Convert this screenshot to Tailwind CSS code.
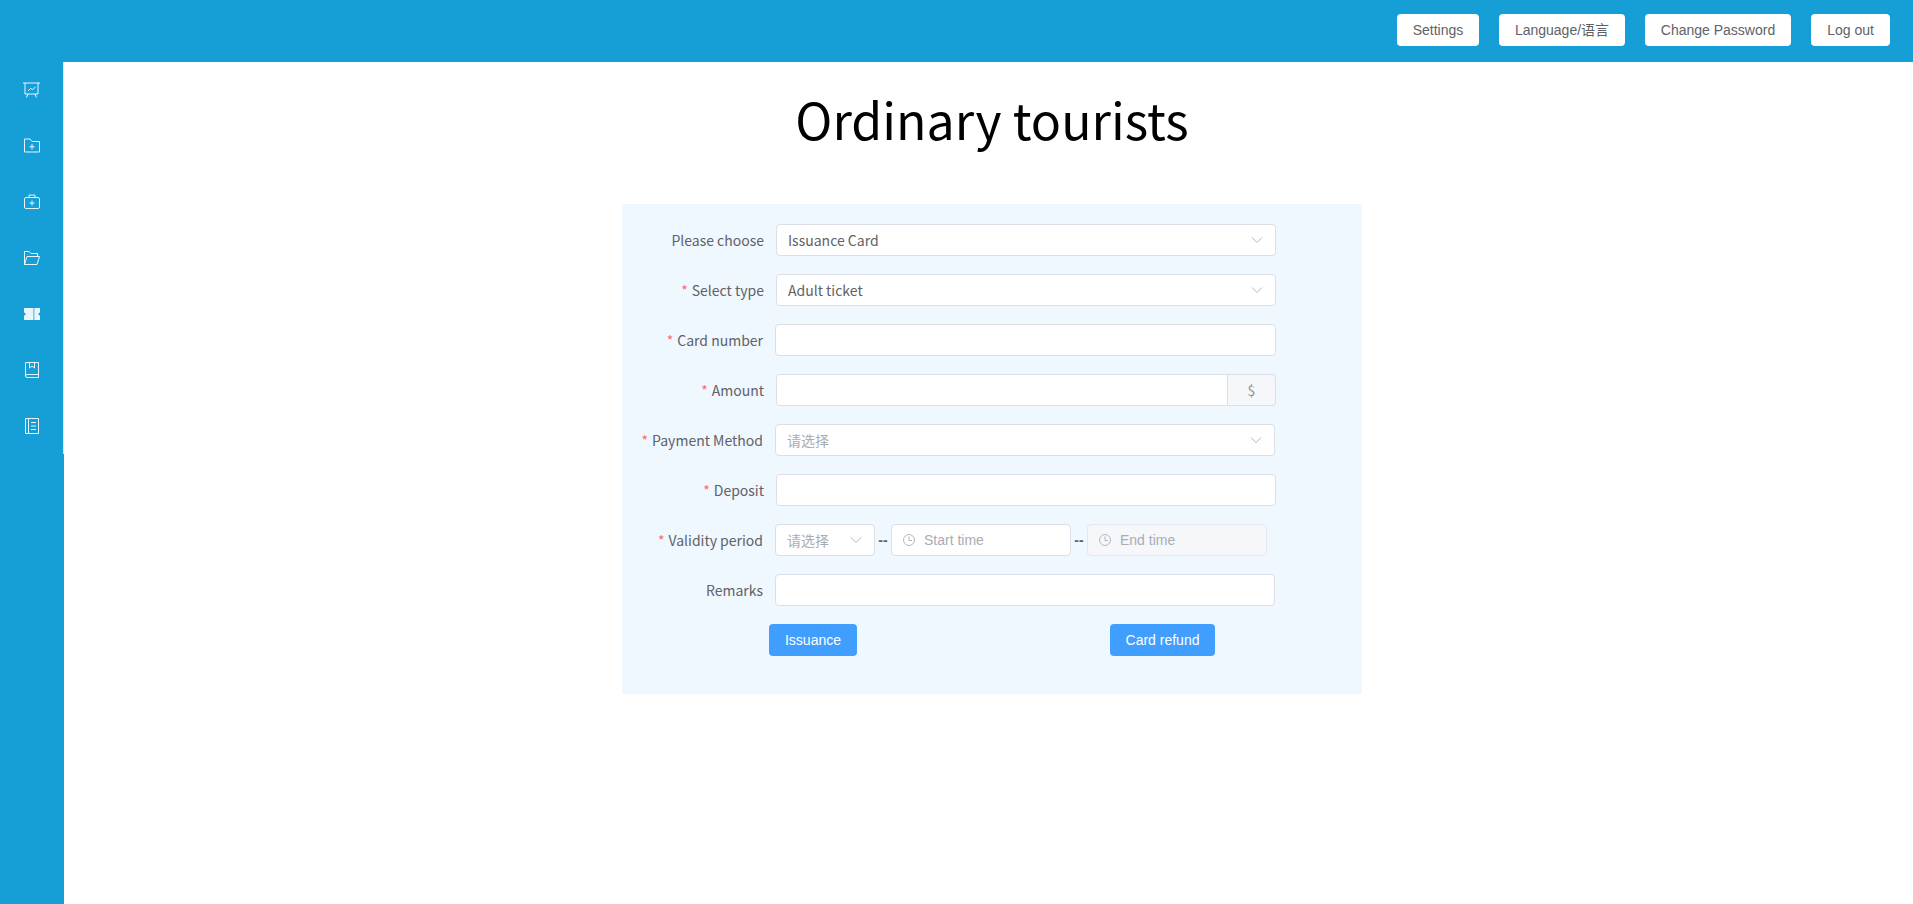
<!DOCTYPE html>
<html lang="en">
<head>
  <meta charset="UTF-8">
  <title>Ordinary tourists</title>
  <script src="https://cdn.jsdelivr.net/npm/@tailwindcss/browser@4"></script>
</head>
<body class="h-screen overflow-hidden flex flex-col bg-white font-['Noto_Sans_CJK_SC','Noto_Sans',sans-serif]">
  <!-- top bar -->
  <header class="h-[62px] shrink-0 bg-[#169fd6] flex items-center justify-end gap-5 pr-[23px] pb-[2px] font-['Liberation_Sans','Noto_Sans_CJK_SC',sans-serif] text-sm text-[#606266]">
    <button class="h-8 w-[82px] bg-white rounded-[4px]">Settings</button>
    <button class="h-8 w-[126px] bg-white rounded-[4px]">Language/语言</button>
    <button class="h-8 w-[146px] bg-white rounded-[4px]">Change Password</button>
    <button class="h-8 w-[79px] bg-white rounded-[4px]">Log out</button>
  </header>

  <div class="flex flex-1 min-h-0">
    <!-- side menu -->
    <aside class="w-16 shrink-0 bg-[#169fd6]">
      <nav class="h-[392px] border-r border-[#e6e6e6] text-white/90">
        <div class="h-14 flex items-center justify-center">
          <svg class="w-[17px] h-4" viewBox="0 0 17 16" fill="none" stroke="currentColor"><path d="M0 1h17M2 1v11h13V1M5 12l-1.500 3.500M12 12l1.500 3.500M5 9l2.500-2.500 2 1 3-2.500"/></svg>
        </div>
        <div class="h-14 flex items-center justify-center">
          <svg class="w-4 h-4" viewBox="0 0 16 16" fill="none" stroke="currentColor"><path d="M.5 1h5.500l2 2.500h7.500v10.500H.5zM8 6v5.500M5.500 8.750h5" /></svg>
        </div>
        <div class="h-14 flex items-center justify-center">
          <svg class="w-4 h-4" viewBox="0 0 16 16" fill="none" stroke="currentColor"><path d="M5 3.500V1h6v2.500M2 3.500h12a1.500 1.500 0 0 1 1.500 1.500v8a1.500 1.500 0 0 1-1.500 1.500H2A1.500 1.500 0 0 1 .5 13V5A1.500 1.500 0 0 1 2 3.500zM8 6.500v5M5.500 9h5"/></svg>
        </div>
        <div class="h-14 flex items-center justify-center">
          <svg class="w-4 h-4" viewBox="0 0 16 16" fill="none" stroke="currentColor"><path d="M.5 14.500V1.500h4.500L7 3.500h6.500v3M.5 14.500h12.500L15.500 6.500H3z"/></svg>
        </div>
        <div class="h-14 flex items-center justify-center">
          <svg class="w-4 h-4" viewBox="0 0 16 16" fill="currentColor"><path d="M0 2h9.500v12H0v-4.500a1.500 1.500 0 0 0 0-3zM10.300 2H16v4.500a1.500 1.500 0 0 0 0 3V14h-5.700z"/></svg>
        </div>
        <div class="h-14 flex items-center justify-center">
          <svg class="w-4 h-4" viewBox="0 0 16 16" fill="none" stroke="currentColor"><path d="M1.500 14V1a.5.5 0 0 1 .5-.5h12.500v15H3a1.500 1.500 0 0 1 0-3h11.500M5.500 .5v5.500l2.500-2 2.500 2V.5"/></svg>
        </div>
        <div class="h-14 flex items-center justify-center">
          <svg class="w-4 h-4" viewBox="0 0 16 16" fill="none" stroke="currentColor"><path d="M1.500 .5h13v15h-13zM4.500 .5v15M7 4.500h5M7 8h5M7 11.500h5"/></svg>
        </div>
      </nav>
    </aside>

    <main class="flex-1 min-w-0 pl-[558px]">
      <h1 class="w-[740px] h-[142px] pt-[21px] text-center text-[50px] leading-[70px] text-black">Ordinary tourists</h1>

      <form class="w-[740px] h-[490px] bg-[#eff7ff] pt-5 text-sm text-[#606266]">
        <div class="flex h-8 mb-[18px]">
          <label class="w-[142px] text-right leading-8">Please choose</label>
          <div class="ml-3 w-[500px] h-8 bg-white border border-[#dcdfe6] rounded-[4px] pl-[11px] pr-[12px] flex items-center justify-between">
            <span>Issuance Card</span>
            <svg class="w-3 h-3 text-[#b4b7bd]" viewBox="0 0 12 12" fill="none" stroke="currentColor"><path d="M1 3.500l5 5 5-5"/></svg>
          </div>
        </div>
        <div class="flex h-8 mb-[18px]">
          <label class="w-[142px] text-right leading-8"><span class="text-[#f56c6c] mr-1">*</span>Select type</label>
          <div class="ml-3 w-[500px] h-8 bg-white border border-[#dcdfe6] rounded-[4px] pl-[11px] pr-[12px] flex items-center justify-between">
            <span>Adult ticket</span>
            <svg class="w-3 h-3 text-[#b4b7bd]" viewBox="0 0 12 12" fill="none" stroke="currentColor"><path d="M1 3.500l5 5 5-5"/></svg>
          </div>
        </div>
        <div class="flex h-8 mb-[18px]">
          <label class="w-[141px] text-right leading-8"><span class="text-[#f56c6c] mr-1">*</span>Card number</label>
          <input class="ml-3 w-[501px] h-8 bg-white border border-[#dcdfe6] rounded-[4px] px-[11px]">
        </div>
        <div class="flex h-8 mb-[18px]">
          <label class="w-[142px] text-right leading-8"><span class="text-[#f56c6c] mr-1">*</span>Amount</label>
          <div class="ml-3 w-[500px] h-8 flex">
            <input class="flex-1 min-w-0 bg-white border border-[#dcdfe6] rounded-l-[4px] px-[11px]">
            <div class="w-[48px] bg-[#f5f7fa] border border-l-0 border-[#dcdfe6] rounded-r-[4px] flex items-center justify-center text-[#909399]">$</div>
          </div>
        </div>
        <div class="flex h-8 mb-[18px]">
          <label class="w-[141px] text-right leading-8"><span class="text-[#f56c6c] mr-1">*</span>Payment Method</label>
          <div class="ml-3 w-[500px] h-8 bg-white border border-[#dcdfe6] rounded-[4px] pl-[11px] pr-[12px] flex items-center justify-between">
            <span class="text-[#a9acb3]">请选择</span>
            <svg class="w-3 h-3 text-[#b4b7bd]" viewBox="0 0 12 12" fill="none" stroke="currentColor"><path d="M1 3.500l5 5 5-5"/></svg>
          </div>
        </div>
        <div class="flex h-8 mb-[18px]">
          <label class="w-[142px] text-right leading-8"><span class="text-[#f56c6c] mr-1">*</span>Deposit</label>
          <input class="ml-3 w-[500px] h-8 bg-white border border-[#dcdfe6] rounded-[4px] px-[11px]">
        </div>
        <div class="flex h-8 mb-[18px]">
          <label class="w-[141px] text-right leading-8"><span class="text-[#f56c6c] mr-1">*</span>Validity period</label>
          <div class="ml-3 w-[100px] h-8 bg-white border border-[#dcdfe6] rounded-[4px] pl-[11px] pr-[12px] flex items-center justify-between">
            <span class="text-[#a9acb3]">请选择</span>
            <svg class="w-3 h-3 text-[#b4b7bd]" viewBox="0 0 12 12" fill="none" stroke="currentColor"><path d="M1 3.500l5 5 5-5"/></svg>
          </div>
          <span class="w-4 text-center leading-8 font-['Liberation_Sans',sans-serif] font-bold text-[#606266]">--</span>
          <div class="w-[180px] h-8 bg-white border border-[#dcdfe6] rounded-[4px] pl-[11px] flex items-center gap-[9px] font-['Liberation_Sans',sans-serif] text-[#a9acb3]">
            <svg class="w-3 h-3 text-[#b4b7bd]" viewBox="0 0 12 12" fill="none" stroke="currentColor"><circle cx="6" cy="6" r="5.500"/><path d="M6 2.500V6.500h3"/></svg>
            <span>Start time</span>
          </div>
          <span class="w-4 text-center leading-8 font-['Liberation_Sans',sans-serif] font-bold text-[#606266]">--</span>
          <div class="w-[180px] h-8 bg-[#f5f7fa] border border-[#e4e7ed] rounded-[4px] pl-[11px] flex items-center gap-[9px] font-['Liberation_Sans',sans-serif] text-[#a9acb3]">
            <svg class="w-3 h-3 text-[#b4b7bd]" viewBox="0 0 12 12" fill="none" stroke="currentColor"><circle cx="6" cy="6" r="5.500"/><path d="M6 2.500V6.500h3"/></svg>
            <span>End time</span>
          </div>
        </div>
        <div class="flex h-8 mb-[18px]">
          <label class="w-[141px] text-right leading-8">Remarks</label>
          <input class="ml-3 w-[500px] h-8 bg-white border border-[#dcdfe6] rounded-[4px] px-[11px]">
        </div>
        <div class="flex font-['Liberation_Sans',sans-serif] text-white">
          <button type="button" class="ml-[147px] w-[88px] h-8 bg-[#409eff] rounded-[4px]">Issuance</button>
          <button type="button" class="ml-[253px] w-[105px] h-8 bg-[#409eff] rounded-[4px]">Card refund</button>
        </div>
      </form>
    </main>
  </div>
</body>
</html>
